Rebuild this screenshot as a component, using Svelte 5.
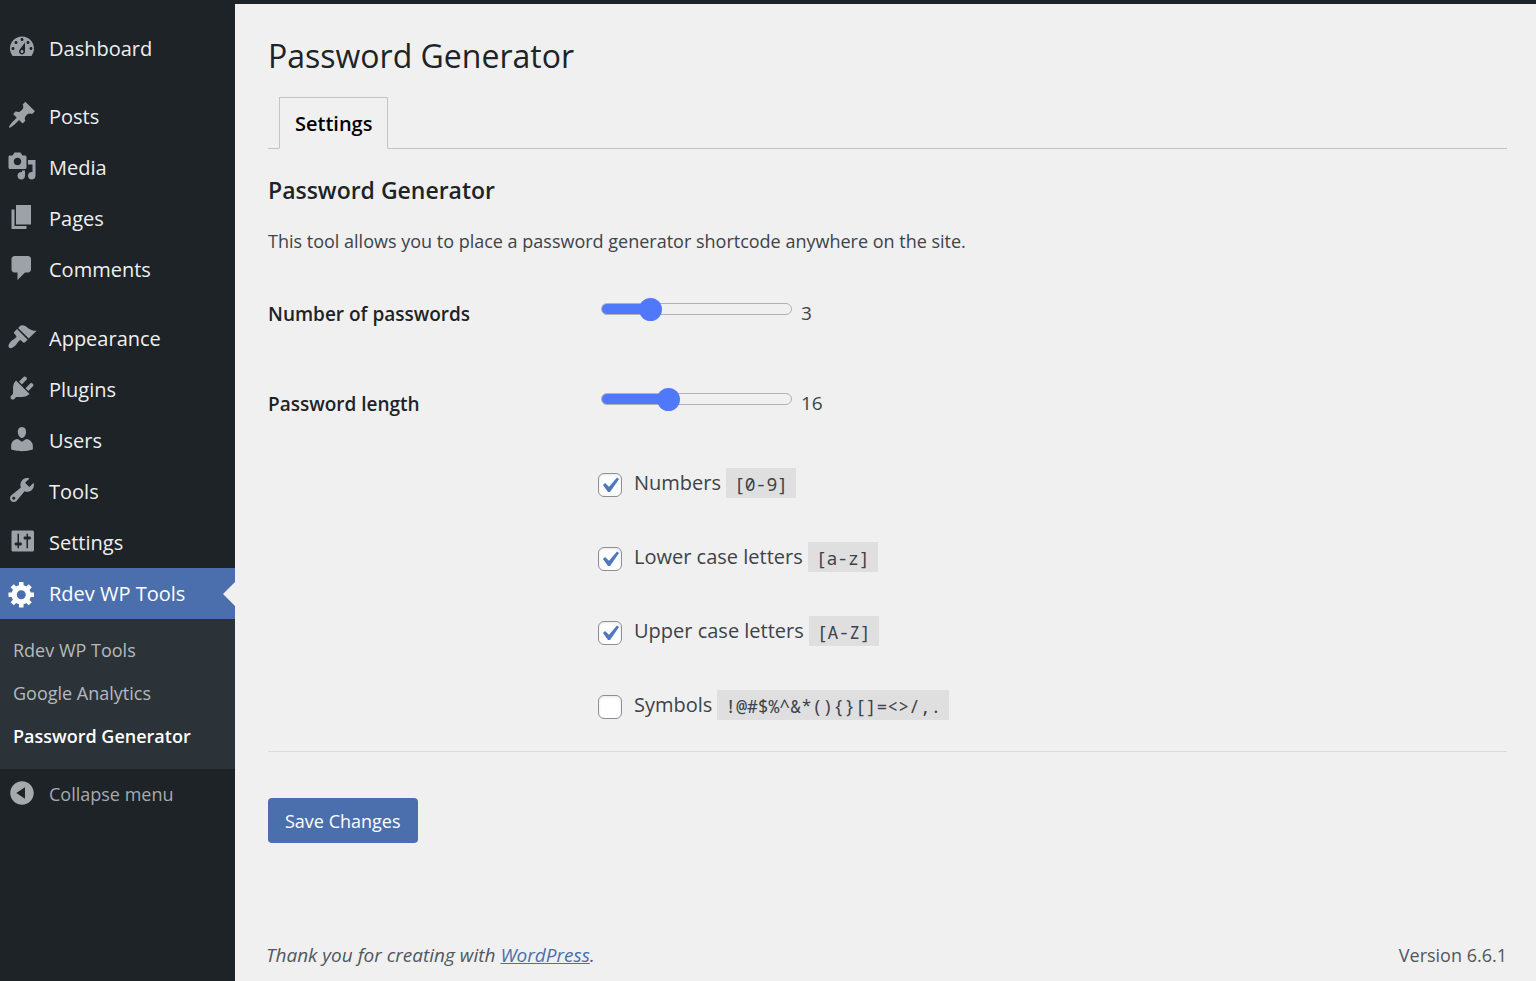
<script>
  const icons = {
    dashboard:
      'M3.76 16h12.48c1.1-1.37 1.76-3.11 1.76-5 0-4.42-3.58-8-8-8s-8 3.58-8 8c0 1.89.66 3.63 1.76 5zM10 4c.55 0 1 .45 1 1s-.45 1-1 1-1-.45-1-1 .45-1 1-1zM6 6c.55 0 1 .45 1 1s-.45 1-1 1-1-.45-1-1 .45-1 1-1zm8 0c.55 0 1 .45 1 1s-.45 1-1 1-1-.45-1-1 .45-1 1-1zm-5.37 5.55L12 7v6c0 1.1-.9 2-2 2s-2-.9-2-2c0-.57.24-1.08.63-1.45zM4 10c.55 0 1 .45 1 1s-.45 1-1 1-1-.45-1-1 .45-1 1-1zm12 0c.55 0 1 .45 1 1s-.45 1-1 1-1-.45-1-1 .45-1 1-1zm-5 3c0-.55-.45-1-1-1s-1 .45-1 1 .45 1 1 1 1-.45 1-1z',
    post: 'M10.44 3.02l1.82-1.82 6.36 6.35-1.83 1.82c-1.05-.68-2.48-.57-3.41.36l-.75.75c-.92.93-1.04 2.35-.35 3.41l-1.83 1.82-2.41-2.41-2.8 2.79c-.42.42-3.38 2.71-3.8 2.29s1.86-3.39 2.28-3.81l2.79-2.79L4.1 9.36l1.83-1.82c1.05.69 2.48.57 3.4-.36l.75-.75c.93-.92 1.05-2.35.36-3.41z',
    media:
      'M13 11V4c0-.55-.45-1-1-1h-1.67L9 1H5L3.67 3H2c-.55 0-1 .45-1 1v7c0 .55.45 1 1 1h10c.55 0 1-.45 1-1zM7 4.5c1.38 0 2.5 1.12 2.5 2.5S8.38 9.5 7 9.5 4.5 8.38 4.5 7 5.62 4.5 7 4.5zM14 6h5v10.5c0 1.38-1.12 2.5-2.5 2.5S14 17.88 14 16.5s1.12-2.5 2.5-2.5c.17 0 .34.02.5.05V9h-3V6zm-4 8.05V13h2v3.5c0 1.38-1.12 2.5-2.5 2.5S7 17.88 7 16.5 8.12 14 9.5 14c.17 0 .34.02.5.05z',
    page: 'M6 15V2h10v13H6zm-1 1h8v2H3V5h2v11z',
    comments: 'M5 2h9c1.1 0 2 .9 2 2v7c0 1.1-.9 2-2 2h-2l-5 5v-5H5c-1.1 0-2-.9-2-2V4c0-1.1.9-2 2-2z',
    appearance:
      'M14.48 11.06L7.41 3.99l1.5-1.5c.5-.56 2.3-.47 3.51.32 1.21.8 1.43 1.28 2.91 2.1 1.18.64 2.45 1.26 4.45.85zm-.71.71L6.7 4.7 4.93 6.47c-.39.39-.39 1.02 0 1.41l1.06 1.06c.39.39.39 1.03 0 1.42-.6.6-1.43 1.11-2.21 1.69-.35.26-.7.53-1.01.84C1.43 14.23.4 16.08 1.4 17.07c.99 1 2.84-.03 4.18-1.36.31-.31.58-.66.85-1.02.57-.78 1.08-1.61 1.69-2.21.39-.39 1.02-.39 1.41 0l1.06 1.06c.39.39 1.02.39 1.41 0z',
    plugins:
      'M13.11 4.36L9.87 7.6 8 5.73l3.24-3.24c.35-.34 1.05-.2 1.56.32.52.51.66 1.21.31 1.55zm-8 1.77l.91-1.12 9.01 9.01-1.19.84c-.71.71-2.63 1.16-3.82 1.16H6.14L4.9 17.26c-.59.59-1.54.59-2.12 0-.59-.58-.59-1.53 0-2.12l1.24-1.24v-3.88c0-1.13.4-3.19 1.09-3.89zm7.26 3.97l3.24-3.24c.34-.35 1.04-.21 1.55.31.52.51.66 1.21.31 1.55l-3.24 3.25z',
    users:
      'M10 9.25c-2.27 0-2.73-3.44-2.73-3.44C7 4.02 7.82 2 9.97 2c2.16 0 2.98 2.02 2.71 3.81 0 0-.41 3.44-2.68 3.44zm0 2.57L12.72 10c2.39 0 4.52 2.33 4.52 4.53v2.49s-3.65 1.13-7.24 1.13c-3.65 0-7.24-1.13-7.24-1.13v-2.49c0-2.25 1.94-4.48 4.47-4.48z',
    tools:
      'M16.68 9.77c-1.34 1.34-3.3 1.67-4.95.99l-5.41 6.52c-.99.99-2.59.99-3.58 0s-.99-2.59 0-3.57l6.52-5.42c-.68-1.65-.35-3.61.99-4.95 1.28-1.28 3.12-1.62 4.72-1.06l-2.89 2.89 2.82 2.82 2.86-2.87c.53 1.58.18 3.39-1.08 4.65zM3.81 16.21c.4.39 1.04.39 1.43 0 .4-.4.4-1.04 0-1.43-.39-.4-1.03-.4-1.43 0-.39.39-.39 1.03 0 1.43z',
    settings:
      'M18 16V4c0-.55-.45-1-1-1H4c-.55 0-1 .45-1 1v12c0 .55.45 1 1 1h13c.55 0 1-.45 1-1zM8 11h1c.55 0 1 .45 1 1s-.45 1-1 1H8v1.5c0 .28-.22.5-.5.5s-.5-.22-.5-.5V13H6c-.55 0-1-.45-1-1s.45-1 1-1h1V5.5c0-.28.22-.5.5-.5s.5.22.5.5V11zm5-2h-1c-.55 0-1-.45-1-1s.45-1 1-1h1V5.5c0-.28.22-.5.5-.5s.5.22.5.5V7h1c.55 0 1 .45 1 1s-.45 1-1 1h-1v5.5c0 .28-.22.5-.5.5s-.5-.22-.5-.5V9z',
    generic:
      'M18 12h-2.18c-.17.7-.44 1.35-.81 1.93l1.54 1.54-2.1 2.1-1.54-1.54c-.58.36-1.23.63-1.91.79V19H8v-2.18c-.68-.16-1.33-.43-1.91-.79l-1.54 1.54-2.12-2.12 1.54-1.54c-.36-.58-.63-1.23-.79-1.91H1V9.03h2.17c.16-.7.44-1.35.8-1.94L2.43 5.55l2.1-2.1 1.54 1.54c.58-.37 1.24-.64 1.93-.81V2h3v2.18c.68.16 1.33.43 1.91.79l1.54-1.54 2.12 2.12-1.54 1.54c.36.59.64 1.24.8 1.94H18V12zm-8.5 1.5c1.66 0 3-1.34 3-3s-1.34-3-3-3-3 1.34-3 3 1.34 3 3 3z',
    collapse:
      'M10 2.16c4.33 0 7.84 3.51 7.84 7.84s-3.51 7.84-7.84 7.84S2.16 14.33 2.16 10 5.71 2.16 10 2.16zm2 11.72V6.12L6.18 9.97z'
  };

  const groups = [
    [['Dashboard', 'dashboard']],
    [['Posts', 'post'], ['Media', 'media'], ['Pages', 'page'], ['Comments', 'comments']],
    [
      ['Appearance', 'appearance'],
      ['Plugins', 'plugins'],
      ['Users', 'users'],
      ['Tools', 'tools'],
      ['Settings', 'settings'],
      ['Rdev WP Tools', 'generic']
    ]
  ];
  const current = 'Rdev WP Tools';
  const submenu = ['Rdev WP Tools', 'Google Analytics', 'Password Generator'];

  let sliders = $state([
    { id: 'count', label: 'Number of passwords', min: 1, max: 10, value: 3 },
    { id: 'length', label: 'Password length', min: 1, max: 46, value: 16 }
  ]);
  let options = $state([
    { label: 'Numbers', code: '[0-9]', checked: true },
    { label: 'Lower case letters', code: '[a-z]', checked: true },
    { label: 'Upper case letters', code: '[A-Z]', checked: true },
    { label: 'Symbols', code: '!@#$%^&*(){}[]=<>/,.', checked: false }
  ]);
</script>

{#snippet icon(name)}
  <svg class="icon" viewBox="0 0 20 20" aria-hidden="true"><path fill-rule="evenodd" d={icons[name]} /></svg>
{/snippet}

<div class="shell">
  <nav class="menu" aria-label="Main menu">
    {#each groups as group}
      <ul class="group">
        {#each group as [label, glyph]}
          <li>
            <a class="item" class:current={label === current} href="#top">{@render icon(glyph)}<span>{label}</span></a>
          </li>
        {/each}
      </ul>
    {/each}
    <ul class="submenu">
      {#each submenu as label, i}
        <li><a class:active={i === 2} href="#top">{label}</a></li>
      {/each}
    </ul>
    <button class="item collapse" type="button">{@render icon('collapse')}<span>Collapse menu</span></button>
  </nav>

  <div class="content">
    <main>
      <h1>Password Generator</h1>
      <div class="tabs"><a class="tab" href="#top">Settings</a></div>
      <h2>Password Generator</h2>
      <p class="intro">This tool allows you to place a password generator shortcode anywhere on the site.</p>

      <form onsubmit={(e) => e.preventDefault()}>
        <div class="fields">
          {#each sliders as s}
            <div class="field">
              <label class="name" for={s.id}>{s.label}</label>
              <div class="control">
                <input
                  id={s.id}
                  type="range"
                  min={s.min}
                  max={s.max}
                  bind:value={s.value}
                  style="--part: {(s.value - s.min) / (s.max - s.min)}"
                />
                <output for={s.id}>{s.value}</output>
              </div>
            </div>
          {/each}
        </div>
        <div class="options">
          {#each options as o}
            <label class="option">
              <input type="checkbox" bind:checked={o.checked} />
              <span>{o.label}</span>
              <code>{o.code}</code>
            </label>
          {/each}
        </div>
        <hr />
        <button class="save" type="submit">Save Changes</button>
      </form>
    </main>
    <footer>
      <em>Thank you for creating with <a href="#top">WordPress</a>.</em>
      <span>Version 6.6.1</span>
    </footer>
  </div>
</div>

<style>
  :global(body) {
    margin: 0;
    background: #f0f0f0;
  }
  .shell {
    display: flex;
    min-height: 100vh;
    background: #f0f0f0;
    color: #3c434a;
    font-family: 'Segoe UI', 'Open Sans', sans-serif;
    font-size: 18px;
  }
  ul {
    margin: 0;
    padding: 0;
    list-style: none;
  }
  .menu {
    flex: 0 0 235px;
    box-sizing: border-box;
    padding-top: 23px;
    background: #1d2327;
  }
  .group {
    margin-bottom: 17px;
  }
  .group:nth-child(2) {
    margin-bottom: 18px;
  }
  .group:nth-child(3) {
    margin-bottom: 0;
  }
  .item {
    position: relative;
    display: flex;
    align-items: center;
    gap: 12px;
    box-sizing: border-box;
    width: 100%;
    height: 51px;
    padding: 0 7px;
    color: #f0f0f1;
    font-size: 20px;
    text-decoration: none;
  }
  .item span {
    margin-top: -1px;
  }
  .icon {
    flex: none;
    width: 30px;
    height: 30px;
    margin-bottom: 3px;
    fill: #9ca2a7;
  }
  .current {
    background: #4b6fad;
    color: #fff;
  }
  .current .icon {
    margin-bottom: 0;
    fill: #fff;
  }
  .current::after {
    content: '';
    position: absolute;
    top: 50%;
    right: 0;
    margin-top: -12px;
    border: 12px solid transparent;
    border-left: 0;
    border-right-color: #f0f0f0;
  }
  .submenu {
    padding: 10px 0 11px;
    background: #2c3338;
  }
  .submenu a {
    display: block;
    padding: 0 13px;
    color: #b4b9be;
    font-size: 18px;
    line-height: 43px;
    text-decoration: none;
  }
  .submenu .active {
    color: #fff;
    font-weight: 600;
  }
  .collapse {
    border: 0;
    background: none;
    color: #a7aaad;
    font-family: inherit;
    font-size: 18px;
    text-align: left;
  }
  .collapse .icon {
    fill: #a7aaad;
  }
  .content {
    display: flex;
    flex: 1;
    flex-direction: column;
    min-width: 0;
    border-top: 4px solid #1d2327;
    padding: 26px 29px 10px 33px;
  }
  main {
    flex: 1;
  }
  h1 {
    margin: 0;
    color: #1d2327;
    font-size: 32px;
    font-weight: 400;
    line-height: 52px;
  }
  .tabs {
    display: flex;
    margin-top: 15px;
    border-bottom: 1px solid #c3c4c7;
    padding-left: 11px;
  }
  .tab {
    margin-bottom: -1px;
    border: 1px solid #c3c4c7;
    border-bottom-color: #f0f0f0;
    padding: 10px 15px 8px;
    background: #f0f0f0;
    color: #000;
    font-size: 20px;
    font-weight: 600;
    line-height: 32px;
    text-decoration: none;
  }
  h2 {
    margin: 24px 0 0;
    color: #1d2327;
    font-size: 23px;
    font-weight: 600;
    line-height: 34px;
  }
  .intro {
    margin: 20px 0 42px;
    line-height: 28px;
  }
  .fields {
    display: grid;
    gap: 60px;
  }
  .field {
    display: grid;
    grid-template-columns: 333px 1fr;
    align-items: center;
    height: 30px;
  }
  .name {
    color: #1d2327;
    font-size: 19px;
    font-weight: 600;
  }
  .control {
    display: flex;
    align-items: center;
    gap: 9px;
    padding-bottom: 2px;
    font-size: 19px;
  }
  input[type='range'] {
    appearance: none;
    width: 191px;
    height: 23px;
    margin: 0 0 8px;
    background: none;
  }
  input[type='range']::-webkit-slider-runnable-track {
    box-sizing: border-box;
    height: 12px;
    border: 1px solid #b2b2b2;
    border-radius: 6px;
    background: linear-gradient(#5078fb, #5078fb) border-box 0 0 / calc(12px + var(--part) * (100% - 23px)) 100%
      no-repeat;
  }
  input[type='range']::-webkit-slider-thumb {
    appearance: none;
    width: 23px;
    height: 23px;
    margin-top: -6px;
    border: 0;
    border-radius: 50%;
    background: #5078fb;
  }
  .options {
    display: grid;
    gap: 42px;
    padding: 51px 0 29px 330px;
  }
  .option {
    display: flex;
    align-items: center;
    height: 32px;
    font-size: 20px;
  }
  .option span {
    margin-bottom: 4px;
  }
  .option input {
    appearance: none;
    box-sizing: border-box;
    width: 24px;
    height: 24px;
    margin: 2px 12px 0 0;
    border: 1px solid #8c8f94;
    border-radius: 6px;
    background: #fff;
    box-shadow: inset 0 1px 3px #0000001a;
  }
  .option input:checked {
    background: #fff
      url("data:image/svg+xml,%3Csvg xmlns='http://www.w3.org/2000/svg' viewBox='0 0 20 20'%3E%3Cpath d='M14.83 4.89l1.34.94-5.81 8.38H9.02L5.78 9.67l1.34-1.25 2.57 2.4z' fill='%235079bd'/%3E%3C/svg%3E") -5px -4px /
      31px no-repeat;
  }
  code {
    margin: 0 0 2px 5px;
    padding: 2px 8px 0;
    background: #dfdfe0;
    font-family: Consolas, 'Noto Sans Mono', 'DejaVu Sans Mono', 'Liberation Mono', monospace;
    font-size: 18px;
    line-height: 28px;
  }
  hr {
    margin: 0 0 46px;
    border: 0;
    border-top: 1px solid #dcdcde;
  }
  .save {
    height: 45px;
    border: 0;
    border-radius: 4px;
    padding: 0 17px;
    background: #4b6fad;
    color: #fff;
    font-family: inherit;
    font-size: 18px;
  }
  footer {
    display: flex;
    justify-content: space-between;
    margin-left: -2px;
    color: #50575e;
    line-height: 31px;
  }
  footer em {
    font-size: 19px;
  }
  footer a {
    color: #4b6fad;
  }
</style>
